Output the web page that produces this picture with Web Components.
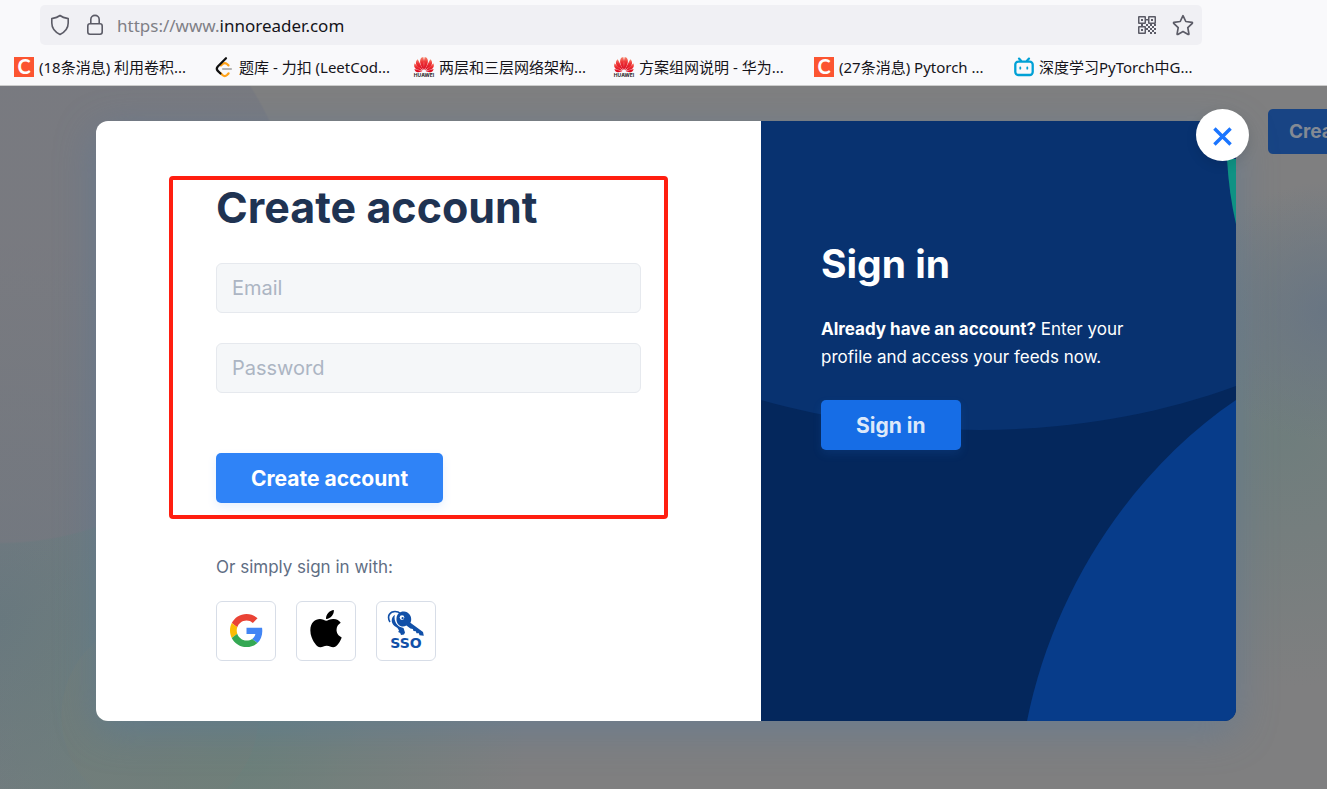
<!DOCTYPE html>
<html lang="en">
<head>
<meta charset="utf-8">
<title>Create account</title>
<style>
body{
    margin: 0;
    font-family: Inter, "Liberation Sans", sans-serif;
}
</style>
</head>
<body>
<app-window></app-window>

<script>
const ICONS = {
    shield: `<svg width="20" height="22" viewBox="0 0 20 22" fill="none" stroke="#5b5b66" stroke-width="1.600" stroke-linejoin="round"><path d="M10 1.500c2.300 1.800 5 2.500 8.200 3.100V9c0 5-3.600 9.200-8.200 11.500C5.400 18.200 1.800 14 1.800 9V4.600C5 4 7.700 3.300 10 1.500z"/></svg>`,
    lock: `<svg width="18" height="22" viewBox="0 0 18 22" fill="none" stroke="#5b5b66" stroke-width="1.600"><rect x="1.800" y="9.800" width="14.400" height="10.400" rx="2.200"/><path d="M4.800 9.800V5.600a4.200 4.200 0 0 1 8.400 0v4.200"/></svg>`,
    qr: `<svg width="18" height="18" viewBox="0 0 18 18" fill="#5b5b66"><path fill-rule="evenodd" d="M1 0h6a1 1 0 0 1 1 1v6a1 1 0 0 1-1 1H1a1 1 0 0 1-1-1V1a1 1 0 0 1 1-1zm.5 1.500v5h5v-5zM11 0h6a1 1 0 0 1 1 1v6a1 1 0 0 1-1 1h-6a1 1 0 0 1-1-1V1a1 1 0 0 1 1-1zm.5 1.500v5h5v-5zM1 10h6a1 1 0 0 1 1 1v6a1 1 0 0 1-1 1H1a1 1 0 0 1-1-1v-6a1 1 0 0 1 1-1zm.5 1.500v5h5v-5z"/><path d="M3 3h2v2H3zM13 3h2v2h-2zM3 13h2v2H3zM8 3h2v1.500H8zM3 8h2v2H3zM8 8h2v2H8zM12 8h2v2h-2zM16 8h2v2h-2zM10 10h2v2h-2zM14 10h2v2h-2zM8 12h2v2H8zM12 12h2v2h-2zM16 12h2v2h-2zM10 14h2v2h-2zM14 14h2v2h-2zM12 16h2v2h-2zM16 16h2v2h-2z"/></svg>`,
    star: `<svg width="22" height="22" viewBox="0 0 22 22" fill="none" stroke="#5b5b66" stroke-width="1.700" stroke-linejoin="round"><path d="M11 1.700l2.800 5.800 6.200.9c.5.100.6.500.3.900l-4.500 4.400 1.100 6.200c.1.500-.3.700-.7.500L11 17.500l-5.200 2.900c-.4.200-.8 0-.7-.5l1.100-6.200L1.700 9.300c-.3-.4-.2-.8.3-.9l6.200-.9z"/></svg>`,
    csdn: `<svg width="20" height="20" viewBox="0 0 20 20"><path fill="#fc5531" d="M0 0h20v20H0z"/><text x="10" y="17" fill="#fff" text-anchor="middle" font-family="Lato, sans-serif" font-weight="bold" font-size="20">C</text></svg>`,
    leetcode: `<svg width="20" height="20" viewBox="0 0 20 20" fill="none" stroke-width="2.200" stroke-linecap="round"><path stroke="#b3b3b3" d="M9 12h8"/><path stroke="#ffa116" d="M6.500 16l2 2c1.300 1.200 3.200 1.200 4.500 0l1.600-1.600M7 8.500l1.700-1.600c1.200-1 3-1 4.300.1l1.500 1.400"/><path stroke="#111" d="M12 1.200L3.800 9.500c-1.200 1.300-1.200 3.100 0 4.400l2.700 2.600"/></svg>`,
    huawei: `<svg width="20" height="20" viewBox="0 0 20 20"><defs><linearGradient id="petal" x2="0" y2="1"><stop stop-color="#f58a70"/><stop offset=".4" stop-color="#ee3034"/><stop offset="1" stop-color="#d8061d"/></linearGradient></defs><g fill="url(#petal)"><path d="M9.700 13C6.400 8.500 5.400 4.500 6.600 1.900 7.200.7 8.200.1 9.300 0c1 3.900 1.100 8 .4 13zM10.300 13c3.300-4.500 4.300-8.500 3.100-11.100-.6-1.200-1.600-1.800-2.700-1.900-1 3.900-1.100 8-.4 13z"/><path d="M9.100 13.300C7.200 8.900 5.200 5.300 3.700 2.300 1.200 4.200 1.500 7.600 3.500 9.600zM10.900 13.300c1.900-4.400 3.900-8 5.400-11 2.500 1.900 2.200 5.300.2 7.300z"/><path d="M8.600 13.700L.6 6.200c-1.200 2.800 0 5.300 2.500 6.300zM11.400 13.700l8-7.500c1.200 2.800 0 5.300-2.500 6.300zM8.400 14.200l-8-2.100c.5 2.400 2.200 3.300 4 3.100zM11.600 14.200l8-2.100c-.5 2.400-2.200 3.300-4 3.100z"/></g><text x="10" y="20" fill="#222" text-anchor="middle" font-family="Inter, sans-serif" font-weight="bold" font-size="5">HUAWEI</text></svg>`,
    bilibili: `<svg width="20" height="20" viewBox="0 0 20 20" fill="none" stroke="#00a1d6" stroke-width="2.300" stroke-linecap="round"><rect x="1.300" y="4.600" width="17.400" height="13.400" rx="3"/><path d="M5 1.600l2 2.200M15 1.600l-2 2.200"/><path stroke-width="1.800" d="M6.300 10.500v1.200M13.300 10.500v1.200"/></svg>`,
    google: `<svg width="33" height="33" viewBox="0 0 48 48"><path fill="#ea4335" d="M24 9.500c3.540 0 6.710 1.220 9.210 3.600l6.850-6.850C35.900 2.380 30.470 0 24 0 14.620 0 6.510 5.380 2.560 13.220l7.980 6.190C12.430 13.720 17.740 9.500 24 9.500z"/><path fill="#4285f4" d="M46.980 24.550c0-1.570-.15-3.090-.38-4.550H24v9.020h12.940c-.58 2.960-2.260 5.480-4.780 7.180l7.730 6c4.510-4.180 7.090-10.360 7.090-17.650z"/><path fill="#fbbc05" d="M10.530 28.590c-.48-1.450-.76-2.990-.76-4.590s.27-3.140.76-4.590l-7.980-6.190C.92 16.460 0 20.120 0 24c0 3.880.92 7.540 2.560 10.780l7.970-6.190z"/><path fill="#34a853" d="M24 48c6.480 0 11.930-2.130 15.890-5.810l-7.730-6c-2.150 1.450-4.920 2.300-8.160 2.300-6.260 0-11.570-4.220-13.470-9.910l-7.980 6.190C6.510 42.620 14.620 48 24 48z"/></svg>`,
    apple: `<svg width="32" height="40" viewBox="0 0 384 480"><path d="M318.700 236.700c-.2-36.700 16.400-64.400 50-84.800-18.800-26.900-47.200-41.700-84.700-44.600-35.500-2.800-74.300 20.700-88.500 20.700-15 0-49.400-19.700-76.400-19.700C63.300 109.200 4 152.800 4 241.500q0 39.300 14.400 81.200c12.800 36.700 59 126.700 107.200 125.200 25.200-.6 43-17.900 75.800-17.900 31.800 0 48.300 17.900 76.400 17.900 48.600-.7 90.400-82.500 102.600-119.300-65.200-30.700-61.700-90-61.700-91.900zM262.100 72.500c27.300-32.400 24.800-61.900 24-72.500-24.100 1.400-52 16.400-67.900 34.900-17.500 19.800-27.800 44.300-25.600 71.900 26.100 2 49.900-11.400 69.500-34.300z"/></svg>`,
    keys: `<svg width="38" height="26" viewBox="0 0 38 26"><path fill="none" stroke="#1150a8" stroke-width="1.600" d="M3 12C-.5 6 3 1.500 8 1.500c2 0 4 .6 5.500 2"/><path fill="#1150a8" d="M9.500 8C10 3.500 13.500 1.300 17 1.600c4.500.4 7.500 4 7.200 8.500-.1 1-.4 1.900-.8 2.600L36 22l.8 3.800-4.300-.5-.6-2.100-2.400.1-.7-2-2.300-.2-.7-2.100-2.400-.5-4-3c-1.700 1-3.700 1.200-5.400.7C11 15 9 12 9.500 8z"/><path fill="#1150a8" d="M7.800 4.800c-4 3-4 8.200-.3 11.200l3 2 1.500 2.500-.8 1.500 2 1 .8 2 3-.5 1-2-1.500-4.500c-6.500-1-10-6.500-8.700-13.200z"/><circle cx="15" cy="7.600" r="2.300" fill="#fff"/><circle cx="15.600" cy="8.200" r="1.100" fill="#1150a8"/></svg>`,
    close: `<svg width="19" height="19" viewBox="0 0 20 20" fill="none" stroke="#1a75ff" stroke-width="3.600"><path d="M1.500 1.500l17 17M18.500 1.500l-17 17"/></svg>`
};

class BookmarkLink extends HTMLElement {
    constructor(){
        super();
        this.shadowDOM = this.attachShadow({mode: "open"});
    }

    connectedCallback(){
        this.shadowDOM.innerHTML = `
        <style>
        :host{
            display: block;
            flex: 0 0 200px;
        }
        a{
            display: flex;
            align-items: center;
            gap: 5px;
            color: #15141a;
            font-size: 15px;
            line-height: 20px;
            text-decoration: none;
            white-space: nowrap;
        }
        svg{
            display: block;
            flex: none;
            overflow: visible;
        }
        </style>
        <a href="#">${ICONS[this.getAttribute("icon")]}<span><slot></slot></span></a>`;
    }
}

class BrowserBar extends HTMLElement {
    constructor(){
        super();
        this.shadowDOM = this.attachShadow({mode: "open"});
    }

    connectedCallback(){
        this.shadowDOM.innerHTML = `
        <style>
        :host{
            display: flow-root;
            background-color: #f9f9fb;
            border-bottom: 1px solid #ccc;
            font-family: "Noto Sans", "Noto Sans CJK SC", sans-serif;
        }
        .address{
            display: flex;
            align-items: center;
            gap: 13px;
            height: 40px;
            margin: 5px 125px 0 40px;
            padding: 0 8px 0 10px;
            border-radius: 5px;
            background-color: #f0f0f4;
        }
        .icons{
            display: flex;
            align-items: center;
            gap: 16px;
        }
        .url{
            flex: 1;
            color: #7f7f86;
            font-size: 17px;
            line-height: 24px;
            padding-top: 2px;
        }
        .url b{
            color: #15141a;
            font-weight: normal;
        }
        button{
            display: flex;
            padding: 0;
            border: none;
            background: none;
        }
        nav{
            display: flex;
            padding: 12px 0 8px 14px;
        }
        </style>
        <div class="address">
            <div class="icons">
                <button aria-label="Tracking protection">${ICONS.shield}</button>
                <button aria-label="Site information">${ICONS.lock}</button>
            </div>
            <div class="url">https://www.<b>innoreader.com</b></div>
            <div class="icons">
                <button aria-label="QR code">${ICONS.qr}</button>
                <button aria-label="Bookmark this page">${ICONS.star}</button>
            </div>
        </div>
        <nav>
            <bookmark-link icon="csdn">(18条消息) 利用卷积...</bookmark-link>
            <bookmark-link icon="leetcode">题库 - 力扣 (LeetCod...</bookmark-link>
            <bookmark-link icon="huawei">两层和三层网络架构...</bookmark-link>
            <bookmark-link icon="huawei">方案组网说明 - 华为...</bookmark-link>
            <bookmark-link icon="csdn">(27条消息) Pytorch ...</bookmark-link>
            <bookmark-link icon="bilibili">深度学习PyTorch中G...</bookmark-link>
        </nav>`;
    }
}

class AccountButton extends HTMLElement {
    constructor(){
        super();
        this.shadowDOM = this.attachShadow({mode: "open"});
    }

    connectedCallback(){
        this.shadowDOM.innerHTML = `
        <style>
        :host{
            display: block;
        }
        button{
            display: block;
            height: 50px;
            padding: 1px 35px 0;
            border: none;
            border-radius: 5px;
            background-color: var(--button-color, #2f83f7);
            box-shadow: 0 4px 10px rgba(47, 131, 247, .12);
            color: var(--button-text, #fff);
            font: bold 21px/24px Inter, "Liberation Sans", sans-serif;
            white-space: nowrap;
            cursor: pointer;
        }
        </style>
        <button type="button"><slot></slot></button>`;
    }
}

class TextField extends HTMLElement {
    constructor(){
        super();
        this.shadowDOM = this.attachShadow({mode: "open"});
    }

    connectedCallback(){
        const label = this.getAttribute("label");
        this.shadowDOM.innerHTML = `
        <style>
        :host{
            display: block;
        }
        input{
            display: block;
            box-sizing: border-box;
            width: 100%;
            height: 50px;
            padding: 0 15px;
            border: 1px solid #e6e9ee;
            border-radius: 6px;
            background-color: #f5f7f9;
            font: 20px/24px Inter, "Liberation Sans", sans-serif;
        }
        input::placeholder{
            color: #acb5c3;
            opacity: 1;
        }
        </style>
        <input type="${this.getAttribute("type")}" placeholder="${label}" aria-label="${label}">`;
    }
}

class CreateAccount extends HTMLElement {
    constructor(){
        super();
        this.shadowDOM = this.attachShadow({mode: "open"});
    }

    connectedCallback(){
        this.shadowDOM.innerHTML = `
        <style>
        :host{
            display: block;
            box-sizing: border-box;
            padding: 55px 93px 60px 73px;
            background-color: #fff;
        }
        form{
            display: grid;
            gap: 30px;
            justify-items: start;
            padding: 4px 23px 12px 43px;
            border: 4px solid #ff1e10;
            border-radius: 4px;
        }
        h1{
            margin: 0;
            padding-bottom: 3px;
            color: #1f3352;
            font-size: 43px;
            line-height: 46px;
            white-space: nowrap;
        }
        text-field{
            width: 100%;
        }
        account-button{
            margin-top: 30px;
        }
        .social{
            padding: 36px 0 0 47px;
        }
        p{
            margin: 0;
            color: #5f6e84;
            font-size: 17px;
            line-height: 24px;
        }
        .providers{
            display: flex;
            gap: 20px;
            margin-top: 22px;
        }
        .providers button{
            display: flex;
            flex-direction: column;
            align-items: center;
            justify-content: center;
            box-sizing: border-box;
            width: 60px;
            height: 60px;
            padding: 0 0 2px;
            border: 1px solid #d7dde7;
            border-radius: 6px;
            background-color: #fff;
            color: #1150a8;
            font: bold 14px/14px "DejaVu Sans", sans-serif;
        }
        </style>
        <form>
            <h1>Create account</h1>
            <text-field type="email" label="Email"></text-field>
            <text-field type="password" label="Password"></text-field>
            <account-button>Create account</account-button>
        </form>
        <div class="social">
            <p>Or simply sign in with:</p>
            <div class="providers">
                <button aria-label="Google">${ICONS.google}</button>
                <button aria-label="Apple">${ICONS.apple}</button>
                <button>${ICONS.keys}<span>SSO</span></button>
            </div>
        </div>`;
    }
}

class SignIn extends HTMLElement {
    constructor(){
        super();
        this.shadowDOM = this.attachShadow({mode: "open"});
    }

    connectedCallback(){
        this.shadowDOM.innerHTML = `
        <style>
        :host{
            display: block;
            position: relative;
            box-sizing: border-box;
            padding: 118px 60px 60px;
            overflow: hidden;
            background-color: #04275c;
            color: #fff;
        }
        .art{
            position: absolute;
            inset: 0;
            width: 100%;
            height: 100%;
        }
        .content{
            position: relative;
        }
        h2{
            margin: 0;
            font-size: 39px;
            line-height: 50px;
        }
        p{
            margin: 26px 0 29px;
            font-size: 17px;
            line-height: 28px;
        }
        account-button{
            --button-color: #166de6;
            --button-text: #dce8fa;
            width: max-content;
        }
        </style>
        <svg class="art" viewBox="0 0 475 600" preserveAspectRatio="none">
            <path fill="#083270" d="M0 0H475V265C320 322 145 320 0 279z"/>
            <path fill="#0f9284" d="M466 38h9v65q-7-30-9-65z"/>
            <path fill="#073c8a" d="M475 279C370 350 292 470 266 600H475z"/>
        </svg>
        <div class="content">
            <h2>Sign in</h2>
            <p><b>Already have an account?</b> Enter your<br>profile and access your feeds now.</p>
            <account-button>Sign in</account-button>
        </div>`;
    }
}

class AccountDialog extends HTMLElement {
    constructor(){
        super();
        this.shadowDOM = this.attachShadow({mode: "open"});
    }

    connectedCallback(){
        this.shadowDOM.innerHTML = `
        <style>
        :host{
            display: block;
            position: relative;
        }
        .panels{
            display: grid;
            grid-template-columns: 7fr 5fr;
            overflow: hidden;
            border-radius: 12px;
        }
        .shadow{
            border-radius: 12px;
            box-shadow: 0 10px 40px rgba(80, 120, 160, .45);
        }
        .close{
            position: absolute;
            top: -12px;
            right: -13px;
            display: flex;
            align-items: center;
            justify-content: center;
            width: 53px;
            height: 52px;
            padding: 3px 0 0;
            border: none;
            border-radius: 50%;
            background-color: #fff;
            box-shadow: 0 4px 12px rgba(0, 0, 0, .1);
        }
        </style>
        <div class="shadow">
            <div class="panels">
                <create-account></create-account>
                <sign-in></sign-in>
            </div>
        </div>
        <button class="close" aria-label="Close">${ICONS.close}</button>`;
    }
}

class AppWindow extends HTMLElement {
    constructor(){
        super();
        this.shadowDOM = this.attachShadow({mode: "open"});
    }

    connectedCallback(){
        this.shadowDOM.innerHTML = `
        <style>
        :host{
            display: flex;
            flex-direction: column;
            min-height: 100vh;
        }
        main{
            position: relative;
            flex: 1;
            padding: 35px 91px 68px 96px;
            overflow: hidden;
            background:
                radial-gradient(circle at 100% 32%, rgba(101, 115, 132, .8), transparent 130px),
                radial-gradient(circle at 97% 50%, rgba(107, 125, 124, .8), transparent 250px),
                radial-gradient(circle at 160px 630px, rgba(114, 125, 121, .5) 98px, transparent 99px),
                radial-gradient(circle at 0 160px, rgba(118, 120, 128, .7) 296px, transparent 298px),
                radial-gradient(circle at 17% 94%, rgba(106, 128, 121, .9), transparent 300px),
                radial-gradient(circle at 0 76%, #68777f, transparent 380px),
                #7f7f80;
        }
        .behind{
            position: absolute;
            top: 23px;
            left: calc(100% - 59px);
            height: 45px;
            padding: 0 21px;
            border: none;
            border-radius: 5px;
            background-color: #184484;
            color: #838a94;
            font: bold 19px/24px Inter, sans-serif;
            white-space: nowrap;
        }
        </style>
        <browser-bar></browser-bar>
        <main>
            <button class="behind">Create account</button>
            <account-dialog></account-dialog>
        </main>`;
    }
}

customElements.define("bookmark-link", BookmarkLink);
customElements.define("browser-bar", BrowserBar);
customElements.define("account-button", AccountButton);
customElements.define("text-field", TextField);
customElements.define("create-account", CreateAccount);
customElements.define("sign-in", SignIn);
customElements.define("account-dialog", AccountDialog);
customElements.define("app-window", AppWindow);
</script>
</body>
</html>
